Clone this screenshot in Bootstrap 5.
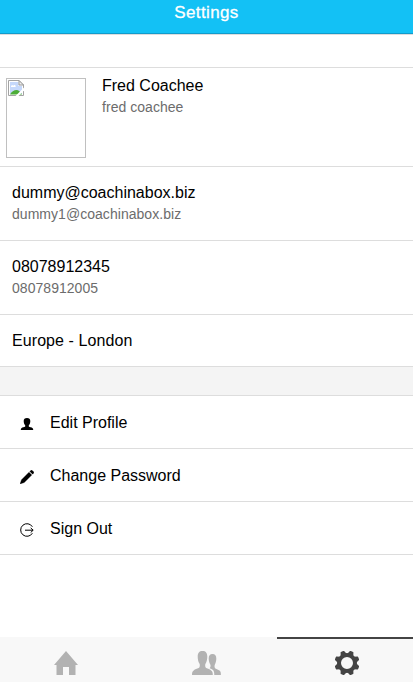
<!DOCTYPE html>
<html lang="en">
<head>
<meta charset="utf-8">
<meta name="viewport" content="width=device-width, initial-scale=1">
<title>Settings</title>
<link href="https://cdn.jsdelivr.net/npm/bootstrap@5.3.0/dist/css/bootstrap.min.css" rel="stylesheet">
<style>
body{font-family:"Liberation Sans",Arial,sans-serif;font-size:16px;line-height:20px;color:#000;background:#fff;height:682px;overflow:hidden}
svg{display:block;flex:none}
.topbar{height:34px;background:#13c1f5;border-bottom:1px solid #129bcb;color:#fff;font-size:17px;letter-spacing:.38px;-webkit-text-stroke:.3px #fff;padding-top:3px}
.spacer{height:34px;border-top:1px solid #ddd;border-bottom:1px solid #ddd}
.settings .list-group-item{border-color:#ddd;border-width:0 0 1px;color:#000;background:#fff;padding:0 12px}
.settings .profile{height:99px;padding:10px 6px 0}
.settings .info{height:74px;padding-top:16px}
.settings .zone{height:52px;padding-top:16px;letter-spacing:.08px}
.settings .divide{height:29px;background:#f4f4f4}
.settings .act{height:53px;padding:1px 20px 0}
.avatar{width:80px;height:80px;border:1px solid #c0c0c0;padding:1px}
.names{padding-left:16px;margin-top:-2px}
.sub{font-size:14px;color:#6c6c6c;line-height:20px;margin-top:1px;letter-spacing:.04px}
.act svg{margin-top:2px}
.tabs{height:45px;background:#f8f8f8}
.tabs.row{margin-left:-4px;margin-right:-4px}
.tab{border-top:2px solid transparent;color:#b2b2b2;padding-top:12px}
.tab.current{border-color:#444;color:#444}
</style>
<script src="https://cdn.jsdelivr.net/npm/bootstrap@5.3.0/dist/js/bootstrap.bundle.min.js"></script>
</head>
<body class="d-flex flex-column">
<header class="topbar text-center">Settings</header>
<div class="spacer"></div>
<div class="settings list-group rounded-0">
  <div class="list-group-item profile d-flex">
    <div class="avatar" role="img" aria-label="Profile picture">
      <svg width="16" height="16" viewBox="0 0 16 16">
        <path d="M.5.5H11l4.500 4.500v10.500H.5z" fill="#fff" stroke="#a3a3a3"/>
        <path d="M2 2h8.500v4H14v8H2z" fill="#c5d8fb"/>
        <path d="M3 6.500c0-1.500 2-1.500 2.300-.8C6 4.600 8 5 7.600 7H3z" fill="#fff"/>
        <path d="M2 14.500c1.500-3 4-4.500 6.500-4.500 2 0 4 1.500 5.500 4.500z" fill="#4dad38"/>
        <path d="M7.500 16L16 7.500v3L10.500 16z" fill="#fff"/>
        <path d="M11 .5v4.500h4.500z" fill="#eee" stroke="#999"/>
      </svg>
    </div>
    <div class="names"><div>Fred Coachee</div><div class="sub">fred coachee</div></div>
  </div>
  <div class="list-group-item info"><div>dummy@coachinabox.biz</div><div class="sub">dummy1@coachinabox.biz</div></div>
  <div class="list-group-item info"><div>08078912345</div><div class="sub">08078912005</div></div>
  <div class="list-group-item zone">Europe - London</div>
  <div class="list-group-item divide"></div>
  <a href="#" class="list-group-item act d-flex align-items-center gap-3">
    <svg width="14" height="14" viewBox="0 0 14 14"><path d="M7 1c2.200 0 3.300 1 3.300 3 0 1.900-.5 3.400-1.500 4.200v1.300c0 .5 1.500.6 2.900 1 1 .4 1.500 1.200 1.500 2.500H.8c0-1.300.5-2.100 1.500-2.500 1.400-.4 2.900-.5 2.900-1V8.200C4.200 7.400 3.700 5.900 3.700 4c0-2 1.100-3 3.300-3z"/></svg>
    <span>Edit Profile</span>
  </a>
  <a href="#" class="list-group-item act d-flex align-items-center gap-3">
    <svg width="14" height="14" viewBox="0 0 14 14"><path d="M9 2.200L11.800 5 4.300 12.500 0 14l1.500-4.300zM9.800 1.400L10.800.4q.7-.6 1.400 0l1.400 1.400q.6.700 0 1.400l-1 1z" stroke="#000" stroke-width=".3"/></svg>
    <span>Change Password</span>
  </a>
  <a href="#" class="list-group-item act d-flex align-items-center gap-3">
    <svg width="14" height="14" viewBox="0 0 14 14" fill="none" stroke="#000"><path d="M12.400 3.800a6.300 6.300 0 1 0 0 6.400M5 7.200h8M10.700 4.900L13.200 7.200l-2.500 2.300"/></svg>
    <span>Sign Out</span>
  </a>
</div>
<nav class="tabs row gx-0 mt-auto" aria-label="Main">
  <a href="#" class="tab col-4 d-flex justify-content-center" aria-label="Home">
    <svg width="24" height="24" viewBox="0 0 24 24" fill="currentColor"><path d="M12 0l12 14h-2.500v10H15v-8H9v8H2.500V14H0z"/></svg>
  </a>
  <a href="#" class="tab col-4 d-flex justify-content-center" aria-label="People">
    <svg width="29" height="24" viewBox="0 0 29 24" fill="currentColor"><path d="M10.500 0c3.300 0 4.800 2 4.800 5.500 0 2.800-.7 5.500-1.700 7-.7 1-.6 4 .6 4.600 1.800.9 3.500 1.200 4.900 2.300 1.400 1 1.700 2 1.700 4.600H0c0-2.600.3-3.600 1.700-4.600 1.400-1.100 3.200-1.400 5-2.300 1.300-.6 1.400-3.600.7-4.600-1.100-1.500-1.700-4.200-1.700-7C5.700 2 7.200 0 10.500 0z"/><path d="M20.500 3c2.600 0 3.800 1.600 3.800 4.500 0 2.500-.6 4.500-1.400 5.900-.6.800-.5 3.500.5 4 1.400.8 2.900 1.100 4.100 2 1.100.9 1.400 1.900 1.400 4.600h-6.600c0-3-.5-4.500-2-5.500-.9-.6-1.700-.8-2.700-1.200 1-.7 1.200-3.100.7-3.900-.9-1.400-1.600-3.400-1.600-5.900 0-2.900 1.200-4.500 3.800-4.500z"/></svg>
  </a>
  <a href="#" class="tab current col-4 d-flex justify-content-center" aria-label="Settings">
    <svg width="24" height="24" viewBox="0 0 24 24">
      <circle cx="12" cy="12" r="8" fill="none" stroke="currentColor" stroke-width="4"/>
      <g fill="currentColor">
        <g id="teeth"><path id="tooth" d="M8.500 4L10.200-.4q1.800-.3 3.600 0L15.500 4z" transform="rotate(22.500 12 12)"/>
        <use href="#tooth" transform="rotate(45 12 12)"/></g>
        <use href="#teeth" transform="rotate(90 12 12)"/>
        <use href="#teeth" transform="rotate(180 12 12)"/>
        <use href="#teeth" transform="rotate(270 12 12)"/>
      </g>
    </svg>
  </a>
</nav>
</body>
</html>
